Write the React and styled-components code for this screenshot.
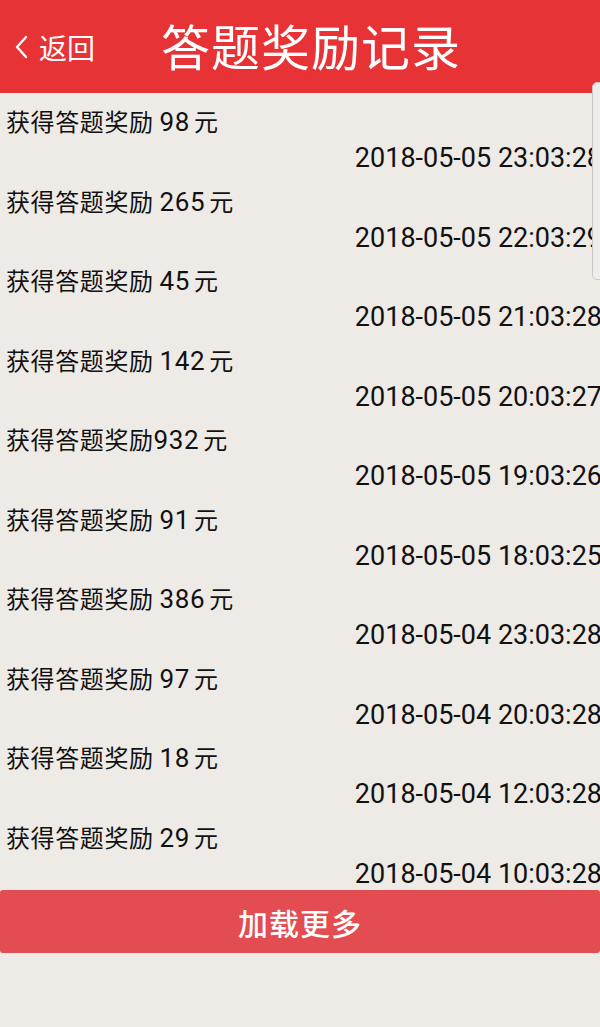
import React from 'react'
import styled, { createGlobalStyle } from 'styled-components'

const GlobalStyle = createGlobalStyle`
  html, body {
    margin: 0;
    padding: 0;
    background: #eeeae6;
    overflow: hidden;
  }
  body {
    font-family: Roboto, "Noto Sans CJK SC", sans-serif;
    color: #111;
  }
`

const Page = styled.div`
  position: relative;
  width: 600px;
  height: 1027px;
  background: #eeeae6;
  overflow: hidden;
`

const Header = styled.div`
  display: flex;
  align-items: center;
  height: 93px;
  background: #e83336;
  color: #fff;
  position: relative;
`

const Back = styled.div`
  display: flex;
  align-items: center;
  gap: 11px;
  padding-left: 14px;
  font-size: 28px;
  font-family: "Noto Sans CJK SC", sans-serif;
`

const Title = styled.h1`
  margin: -4px 0 0 66px;
  font-size: 49px;
  font-weight: 400;
  font-family: "Noto Sans CJK SC", sans-serif;
  letter-spacing: 1px;
`

const List = styled.div`
  display: flex;
  flex-direction: column;
`

const Row = styled.div`
  height: 79.5px;
  box-sizing: border-box;
  padding-top: 13px;
  display: flex;
  flex-direction: column;
  gap: 6px;
`

const Reward = styled.div`
  padding-left: 6px;
  font-size: 24px;
  line-height: 30px;
  font-family: "Noto Sans CJK SC", sans-serif;
  letter-spacing: 0.6px;

  span {
    font-family: Roboto, sans-serif;
    font-size: 26px;
    margin-right: 4px;
  }
`

const Time = styled.div`
  text-align: right;
  font-size: 27px;
  line-height: 30px;
  margin-right: -2px;
  white-space: nowrap;
`

const MoreButton = styled.button`
  display: block;
  width: 100%;
  height: 63px;
  margin-top: 2px;
  border: none;
  border-radius: 3px;
  background: #e34c51;
  color: #fff;
  font-size: 30px;
  font-weight: 500;
  font-family: "Noto Sans CJK SC", sans-serif;
  letter-spacing: 1px;
`

const ScrollThumb = styled.div`
  position: absolute;
  top: 82px;
  right: -4px;
  width: 10px;
  height: 196px;
  border: 1px solid #c9c6c3;
  border-radius: 5px;
  background: #efedeb;
`

const records = [
  ['98', '2018-05-05 23:03:28', true],
  ['265', '2018-05-05 22:03:29', true],
  ['45', '2018-05-05 21:03:28', true],
  ['142', '2018-05-05 20:03:27', true],
  ['932', '2018-05-05 19:03:26', false],
  ['91', '2018-05-05 18:03:25', true],
  ['386', '2018-05-04 23:03:28', true],
  ['97', '2018-05-04 20:03:28', true],
  ['18', '2018-05-04 12:03:28', true],
  ['29', '2018-05-04 10:03:28', true],
]

export default function App() {
  return (
    <Page>
      <GlobalStyle />
      <Header>
        <Back>
          <svg width="14" height="24" viewBox="0 0 14 24" fill="none">
            <path d="M12 2 L3 12 L12 22" stroke="#fff" strokeWidth="2.4" strokeLinecap="round" strokeLinejoin="round" />
          </svg>
          返回
        </Back>
        <Title>答题奖励记录</Title>
      </Header>
      <List>
        {records.map(([amount, time, spaced]) => (
          <Row key={time}>
            <Reward>
              获得答题奖励{spaced ? ' ' : ''}<span>{amount}</span>元
            </Reward>
            <Time>{time}</Time>
          </Row>
        ))}
      </List>
      <MoreButton>加载更多</MoreButton>
      <ScrollThumb />
    </Page>
  )
}
